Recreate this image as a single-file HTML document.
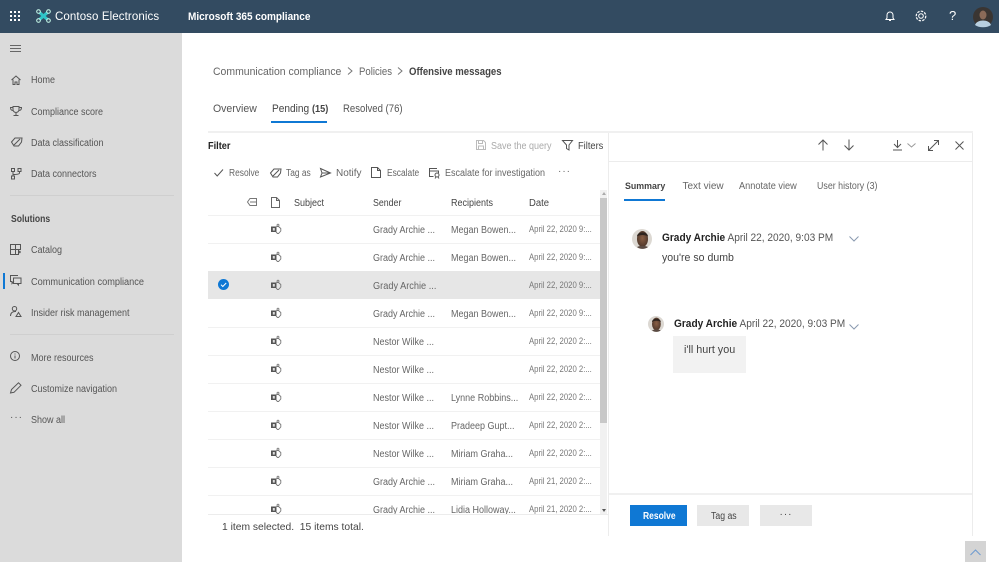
<!DOCTYPE html>
<html><head><meta charset="utf-8"><title>Microsoft 365 compliance</title>
<style>
html,body{margin:0;padding:0;width:999px;height:562px;overflow:hidden;background:#fff;font-family:"Liberation Sans",sans-serif}
.a{position:absolute}
.t{position:absolute;white-space:nowrap;line-height:14px;transform-origin:0 50%;transform:translateY(-6px) scaleX(var(--s,1))}
.nav{font-size:10px;color:#555;left:31px;--s:.9}
.c{font-size:10px;color:#666;--s:.9}
.d{font-size:9px;color:#777;--s:.86;margin-top:-1px}
.h{font-size:10px;color:#444;--s:.9}
.tb{font-size:10px;color:#666;--s:.84}
svg{position:absolute;overflow:visible;fill:none}
.row{position:absolute;left:208px;width:392px;height:27px;border-bottom:1px solid #f1f1f1}
</style></head><body>
<svg width="0" height="0" style="position:absolute"><defs>
<g id="tm" fill="none"><rect x="0" y="2.500" width="5.500" height="5.500" fill="#555"/><rect x="1.800" y="4" width="2" height="2.600" fill="#ddd"/><path d="M5.500 2.500H7.500l2.300 2v2.500L7.500 9.500H6.500L5 8" stroke="#777" stroke-width=".9"/><circle cx="7" cy="1.200" r="1" stroke="#777" stroke-width=".8"/></g>
<radialGradient id="sk" cx=".5" cy=".45" r=".6"><stop offset="0" stop-color="#8a5f45"/><stop offset="1" stop-color="#4a3428"/></radialGradient>
<g id="av"><circle cx="10" cy="10" r="10" fill="#dcd8d2"/><ellipse cx="10.500" cy="10" rx="5.500" ry="8" fill="url(#sk)"/><path d="M5 7.500C5 2 16 2 16 7.500 13 5.500 8 5.500 5 7.500z" fill="#2e241e"/><path d="M5 18c3-1.500 8-1.500 11 0-3 2.500-8 2.500-11 0z" fill="#5a4a42"/></g>
</defs></svg>

<!-- top bar -->
<div class="a" style="left:0;top:0;width:999px;height:33px;background:#334b61"></div>
<svg style="left:10px;top:11px" width="11" height="11"><g fill="#fff"><rect x="0" y="0" width="2" height="2"/><rect x="4" y="0" width="2" height="2"/><rect x="8" y="0" width="2" height="2"/><rect x="0" y="4" width="2" height="2"/><rect x="4" y="4" width="2" height="2"/><rect x="8" y="4" width="2" height="2"/><rect x="0" y="8" width="2" height="2"/><rect x="4" y="8" width="2" height="2"/><rect x="8" y="8" width="2" height="2"/></g></svg>
<svg style="left:36px;top:9px" width="15" height="14"><path d="M3 3l9 8M12 3l-9 8" stroke="#2fc4c8" stroke-width="3"/><circle cx="2.500" cy="2.500" r="1.800" stroke="#cfe" stroke-width="1" fill="#334b61"/><circle cx="12.500" cy="2.500" r="1.800" stroke="#cfe" stroke-width="1" fill="#334b61"/><circle cx="2.500" cy="11.500" r="1.800" stroke="#cfe" stroke-width="1" fill="#334b61"/><circle cx="12.500" cy="11.500" r="1.800" stroke="#cfe" stroke-width="1" fill="#334b61"/></svg>
<div class="t" style="left:55px;top:15.500px;font-size:11.500px;color:#fff;letter-spacing:.1px">Contoso Electronics</div>
<div class="t" style="left:188px;top:15.500px;font-size:11px;color:#fff;font-weight:bold;--s:.91">Microsoft 365 compliance</div>
<svg style="left:885px;top:10px" width="10" height="12" stroke="#fff"><path d="M2 8V5a3 3 0 0 1 6 0v3l1 1.500H1zM4 10.500h2"/></svg>
<svg style="left:915px;top:10px" width="12" height="12" stroke="#fff"><circle cx="6" cy="6" r="2.300"/><circle cx="6" cy="6" r="4.800" stroke-width="1.200" stroke-dasharray="2.500 1.200"/></svg>
<div class="t" style="left:949px;top:15px;font-size:13px;color:#fff">?</div>
<svg style="left:973px;top:7px" width="20" height="20"><circle cx="10" cy="10" r="10" fill="#3a3532"/><ellipse cx="10" cy="8" rx="3.500" ry="4.500" fill="#8a6a58"/><path d="M2 18c2-6 14-6 16 0-4 3-12 3-16 0z" fill="#b8cfe0"/></svg>

<!-- left nav -->
<div class="a" style="left:0;top:33px;width:182px;height:529px;background:#dbdbdb"></div>
<svg style="left:10px;top:45px" width="12" height="8" stroke="#666"><path d="M0 .500h11M0 3.500h11M0 6.500h11"/></svg>
<svg style="left:11px;top:75px" width="11" height="11" stroke="#555"><path d="M.5 5L5 1l4.500 4M2 4.500V9.500h2V7h2v2.500h2V4.500"/></svg>
<div class="t nav" style="top:80px">Home</div>
<svg style="left:10px;top:106px" width="12" height="11" stroke="#555"><path d="M3 .5h6v3a3 3 0 0 1-6 0zM3 1.500H.5c0 2 1 3 2.500 3M9 1.500h2.500c0 2-1 3-2.500 3M6 6.500V9M3.500 9.500h5" /></svg>
<div class="t nav" style="top:111.500px">Compliance score</div>
<svg style="left:11px;top:137px" width="12" height="10" stroke="#555"><path d="M.5 5L4 1h7l-.5 4-3 4H3zM3 8l6-6"/></svg>
<div class="t nav" style="top:142.500px">Data classification</div>
<svg style="left:11px;top:168px" width="11" height="12" stroke="#555"><rect x=".5" y=".5" width="3" height="3"/><rect x="7" y=".5" width="3" height="3"/><rect x=".5" y="8" width="3" height="3"/><path d="M2 3.500V8M8.500 3.500V5C8.500 6 7 6.500 2 6.500"/></svg>
<div class="t nav" style="top:174px">Data connectors</div>
<div class="a" style="left:10px;top:195px;width:164px;height:1px;background:#cfcfcf"></div>
<div class="t" style="left:10.500px;top:218.500px;font-size:10px;font-weight:bold;color:#444;--s:.86">Solutions</div>
<svg style="left:10px;top:244px" width="11" height="11" stroke="#555"><path d="M.5.500h10v5h-2v5H.5zM.5 5.500h10M5.500.500v10M8.500 8h2.500M9.700 6.800v2.500"/></svg>
<div class="t nav" style="top:250px">Catalog</div>
<div class="a" style="left:3px;top:273px;width:2px;height:16px;background:#0f78d4"></div>
<svg style="left:10px;top:275px" width="12" height="11" stroke="#555"><path d="M8 .5H.5v6h1.500v2l2-2"/><rect x="3.500" y="3" width="7.500" height="5.500"/><path d="M8.500 8.500v1.500l-1.500-1.500"/></svg>
<div class="t nav" style="top:281.500px;--s:.92">Communication compliance</div>
<svg style="left:10px;top:306px" width="12" height="12" stroke="#555"><circle cx="4.500" cy="2.700" r="2.200"/><path d="M.5 10c0-3 2-4.800 5.500-4.500M6 10.500l2.500-4 2.500 4z"/></svg>
<div class="t nav" style="top:312.500px">Insider risk management</div>
<div class="a" style="left:10px;top:334px;width:164px;height:1px;background:#cfcfcf"></div>
<svg style="left:10px;top:351px" width="11" height="11" stroke="#555"><circle cx="5" cy="5" r="4.500"/><path d="M5 4.500v3M5 2.500v1"/></svg>
<div class="t nav" style="top:357.500px">More resources</div>
<svg style="left:10px;top:382px" width="12" height="12" stroke="#555"><path d="M.5 11l1-3.500L8.500.8l2.500 2.500-7 7z"/></svg>
<div class="t nav" style="top:389px">Customize navigation</div>
<div class="t nav" style="left:10px;top:417px;letter-spacing:1px;font-size:10px;--s:1">···</div>
<div class="t nav" style="top:420px">Show all</div>

<!-- breadcrumb -->
<div class="t" style="left:213px;top:71px;font-size:11px;color:#666;--s:.95">Communication compliance</div>
<svg style="left:347px;top:67px" width="6" height="9" stroke="#777"><path d="M1 .5l4 3.500-4 3.500"/></svg>
<div class="t" style="left:359px;top:71px;font-size:11px;color:#666;--s:.87">Policies</div>
<svg style="left:397px;top:67px" width="6" height="9" stroke="#777"><path d="M1 .5l4 3.500-4 3.500"/></svg>
<div class="t" style="left:409px;top:71px;font-size:11px;color:#444;font-weight:bold;--s:.87">Offensive messages</div>

<!-- tabs -->
<div class="t" style="left:213px;top:108px;font-size:11px;color:#555;--s:.955">Overview</div>
<div class="t" style="left:271.500px;top:108px;font-size:11px;color:#444;--s:.92">Pending <span style="font-size:10px;font-weight:bold">(15)</span></div>
<div class="a" style="left:271px;top:121px;width:56px;height:1.500px;background:#0f78d4"></div>
<div class="t" style="left:343px;top:108px;font-size:11px;color:#555;--s:.87">Resolved (76)</div>
<div class="a" style="left:208px;top:131px;width:765px;height:2px;background:#f0f0f0"></div>

<!-- filter row -->
<div class="t" style="left:208px;top:146px;font-size:10px;font-weight:bold;color:#222;--s:.92">Filter</div>
<svg style="left:476px;top:140px" width="10" height="10" stroke="#bbb"><path d="M.5.5h7l2 2v7h-9zM2.500.5v3h4v-3M2.500 9.500v-3.500h5v3.500"/></svg>
<div class="t" style="left:490.500px;top:145.500px;font-size:10px;color:#aaa;--s:.9">Save the query</div>
<svg style="left:562px;top:140px" width="12" height="11" stroke="#555"><path d="M.5.500h10L7 5v5L4.500 8.500V5z"/></svg>
<div class="t" style="left:578px;top:145.500px;font-size:10px;color:#444;--s:.93">Filters</div>

<!-- toolbar -->
<svg style="left:214px;top:169px" width="10" height="8" stroke="#555"><path d="M.5 4l2.700 3L9 .5"/></svg>
<div class="t tb" style="left:229px;top:173px">Resolve</div>
<svg style="left:270px;top:168px" width="12" height="10" stroke="#555"><path d="M.5 5L4 1h7l-.5 4-3 4H3zM3 8l6-6"/></svg>
<div class="t tb" style="left:285.500px;top:173px">Tag as</div>
<svg style="left:320px;top:168px" width="11" height="10" stroke="#555"><path d="M.5.500l10 4.500-10 4 1.500-4zM2 5h8"/></svg>
<div class="t tb" style="left:336px;top:173px;--s:1">Notify</div>
<svg style="left:371px;top:167px" width="11" height="12" stroke="#555"><path d="M.5.500h6l3 3v7h-9zM6.500.500v3h3"/></svg>
<div class="t tb" style="left:387px;top:173px">Escalate</div>
<svg style="left:429px;top:168px" width="12" height="11" stroke="#555"><path d="M8 .5H.5v8h4M.5 3h9v2"/><circle cx="8" cy="7" r="2"/><path d="M7 9l-1 1.500M9 9l1 1.500"/></svg>
<div class="t tb" style="left:445px;top:173px;--s:.9">Escalate for investigation</div>
<div class="t tb" style="left:558px;top:171px;letter-spacing:1px;--s:1">···</div>

<!-- table header -->
<svg style="left:247px;top:198px" width="10" height="8" stroke="#777"><path d="M3 .5h6.500v7H3L.5 4zM3 4h6.500"/></svg>
<svg style="left:271px;top:197px" width="9" height="11" stroke="#666"><path d="M.5.500h5l3 3v7h-8zM5.500.500v3h3"/></svg>
<div class="t h" style="left:294px;top:202.500px">Subject</div>
<div class="t h" style="left:373px;top:202.500px;--s:.88">Sender</div>
<div class="t h" style="left:451px;top:202.500px">Recipients</div>
<div class="t h" style="left:529px;top:202.500px;--s:.95">Date</div>
<div class="a" style="left:208px;top:215px;width:392px;height:1px;background:#f1f1f1"></div>

<!-- rows -->
<div class="row" style="top:216px"></div>
<div class="row" style="top:244px"></div>
<div class="a" style="left:208px;top:271px;width:392px;height:28px;background:#e6e6e6"></div>
<div class="row" style="top:300px"></div>
<div class="row" style="top:328px"></div>
<div class="row" style="top:356px"></div>
<div class="row" style="top:384px"></div>
<div class="row" style="top:412px"></div>
<div class="row" style="top:440px"></div>
<div class="row" style="top:468px"></div>

<svg style="left:218px;top:279px" width="11" height="11"><circle cx="5.500" cy="5.500" r="5.500" fill="#0f78d4"/><path d="M3 5.700l1.800 1.800L8.200 4" stroke="#fff" stroke-width="1"/></svg>

<svg style="left:271px;top:224px" width="11" height="10"><use href="#tm"/></svg>
<svg style="left:271px;top:252px" width="11" height="10"><use href="#tm"/></svg>
<svg style="left:271px;top:280px" width="11" height="10"><use href="#tm"/></svg>
<svg style="left:271px;top:308px" width="11" height="10"><use href="#tm"/></svg>
<svg style="left:271px;top:336px" width="11" height="10"><use href="#tm"/></svg>
<svg style="left:271px;top:364px" width="11" height="10"><use href="#tm"/></svg>
<svg style="left:271px;top:392px" width="11" height="10"><use href="#tm"/></svg>
<svg style="left:271px;top:420px" width="11" height="10"><use href="#tm"/></svg>
<svg style="left:271px;top:448px" width="11" height="10"><use href="#tm"/></svg>
<svg style="left:271px;top:476px" width="11" height="10"><use href="#tm"/></svg>
<svg style="left:271px;top:504px" width="11" height="10"><use href="#tm"/></svg>

<div class="t c" style="left:373px;top:230px">Grady Archie ...</div><div class="t c" style="left:451px;top:230px">Megan Bowen...</div><div class="t d" style="left:529px;top:229px">April 22, 2020 9:...</div>
<div class="t c" style="left:373px;top:258px">Grady Archie ...</div><div class="t c" style="left:451px;top:258px">Megan Bowen...</div><div class="t d" style="left:529px;top:257px">April 22, 2020 9:...</div>
<div class="t c" style="left:373px;top:286px;--s:.92">Grady Archie ...</div><div class="t d" style="left:529px;top:285px">April 22, 2020 9:...</div>
<div class="t c" style="left:373px;top:314px">Grady Archie ...</div><div class="t c" style="left:451px;top:314px">Megan Bowen...</div><div class="t d" style="left:529px;top:313px">April 22, 2020 9:...</div>
<div class="t c" style="left:373px;top:342px">Nestor Wilke ...</div><div class="t d" style="left:529px;top:341px">April 22, 2020 2:...</div>
<div class="t c" style="left:373px;top:370px">Nestor Wilke ...</div><div class="t d" style="left:529px;top:369px">April 22, 2020 2:...</div>
<div class="t c" style="left:373px;top:398px">Nestor Wilke ...</div><div class="t c" style="left:451px;top:398px">Lynne Robbins...</div><div class="t d" style="left:529px;top:397px">April 22, 2020 2:...</div>
<div class="t c" style="left:373px;top:426px">Nestor Wilke ...</div><div class="t c" style="left:451px;top:426px">Pradeep Gupt...</div><div class="t d" style="left:529px;top:425px">April 22, 2020 2:...</div>
<div class="t c" style="left:373px;top:454px">Nestor Wilke ...</div><div class="t c" style="left:451px;top:454px">Miriam Graha...</div><div class="t d" style="left:529px;top:453px">April 22, 2020 2:...</div>
<div class="t c" style="left:373px;top:482px">Grady Archie ...</div><div class="t c" style="left:451px;top:482px">Miriam Graha...</div><div class="t d" style="left:529px;top:481px">April 21, 2020 2:...</div>
<div class="t c" style="left:373px;top:510px">Grady Archie ...</div><div class="t c" style="left:451px;top:510px">Lidia Holloway...</div><div class="t d" style="left:529px;top:509px">April 21, 2020 2:...</div>

<!-- scrollbar -->
<div class="a" style="left:600px;top:190px;width:7px;height:326px;background:#f1f1f1"></div>
<div class="a" style="left:600px;top:198px;width:7px;height:225px;background:#c8c8c8"></div>
<svg style="left:602px;top:192px" width="4" height="3"><path d="M0 3L2 0l2 3z" fill="#aaa"/></svg>
<svg style="left:602px;top:509px" width="4" height="3"><path d="M0 0L2 3l2-3z" fill="#555"/></svg>

<!-- footer of list -->
<div class="a" style="left:208px;top:514px;width:400px;height:22px;background:#fff;border-top:1px solid #ececec"></div>
<div class="t" style="left:221.500px;top:526px;font-size:10.500px;color:#444;--s:.98">1 item selected.&nbsp; 15 items total.</div>

<!-- right panel frame -->
<div class="a" style="left:608px;top:133px;width:1px;height:403px;background:#ececec"></div>
<div class="a" style="left:972px;top:133px;width:1px;height:403px;background:#ececec"></div>
<div class="a" style="left:609px;top:161px;width:363px;height:1px;background:#ececec"></div>
<div class="a" style="left:609px;top:493px;width:363px;height:2px;background:#f0f0f0"></div>

<svg style="left:818px;top:139px" width="10" height="12" stroke="#555"><path d="M5 11.500V1M.5 5.500L5 1l4.500 4.500"/></svg>
<svg style="left:844px;top:139px" width="10" height="12" stroke="#555"><path d="M5 .5V11M.5 6.500L5 11l4.500-4.500"/></svg>
<svg style="left:893px;top:140px" width="9" height="11" stroke="#555"><path d="M4.500 0v7M1 4l3.500 3.500L8 4M0 10h9"/></svg>
<svg style="left:907px;top:143px" width="9" height="5" stroke="#999"><path d="M.5.500L4.500 4 8.500.5"/></svg>
<svg style="left:928px;top:140px" width="11" height="11" stroke="#555"><path d="M1 10L10 1M6 .5h4.500V5M.5 6v4.500H5"/></svg>
<svg style="left:955px;top:141px" width="9" height="9" stroke="#555"><path d="M.5.500l8 8M8.500.500l-8 8"/></svg>

<div class="t" style="left:624.500px;top:186px;font-size:9.500px;font-weight:bold;color:#444;--s:.93">Summary</div>
<div class="a" style="left:624px;top:199px;width:41px;height:1.500px;background:#0f78d4"></div>
<div class="t" style="left:682.500px;top:186px;font-size:10px;color:#666">Text view</div>
<div class="t" style="left:738.500px;top:186px;font-size:10px;color:#666;--s:.92">Annotate view</div>
<div class="t" style="left:816.500px;top:186px;font-size:10px;color:#666;--s:.885">User history (3)</div>

<!-- messages -->
<svg style="left:632px;top:229px" width="20" height="20"><use href="#av"/></svg>
<div class="t" style="left:662px;top:237px;font-size:11px;color:#555;--s:.92"><b style="color:#222">Grady Archie</b> April 22, 2020, 9:03 PM</div>
<svg style="left:849px;top:236px" width="10" height="6" stroke="#8a9ab0"><path d="M.5.500L5 5 9.500.5"/></svg>
<div class="t" style="left:662px;top:257px;font-size:11px;color:#444;--s:.96">you're so dumb</div>

<svg style="left:648px;top:316px" width="16" height="16"><g transform="scale(.8)"><use href="#av"/></g></svg>
<div class="t" style="left:673.500px;top:323px;font-size:11px;color:#555;--s:.92"><b style="color:#222">Grady Archie</b> April 22, 2020, 9:03 PM</div>
<svg style="left:849px;top:324px" width="10" height="6" stroke="#8a9ab0"><path d="M.5.500L5 5 9.500.5"/></svg>
<div class="a" style="left:673px;top:336px;width:73px;height:37px;background:#f2f2f2"></div>
<div class="t" style="left:683.500px;top:349px;font-size:11px;color:#444;--s:.98">i'll hurt you</div>

<!-- buttons -->
<div class="a" style="left:630px;top:505px;width:57px;height:21px;background:#0f78d4"></div>
<div class="t" style="left:642.500px;top:516px;color:#fff;font-size:10px;font-weight:bold;--s:.85">Resolve</div>
<div class="a" style="left:697px;top:505px;width:52px;height:21px;background:#e8e8e8"></div>
<div class="t" style="left:711px;top:516px;color:#444;font-size:10px;--s:.87">Tag as</div>
<div class="a" style="left:760px;top:505px;width:52px;height:21px;background:#e8e8e8;color:#444;font-size:10px;line-height:20px;text-align:center;letter-spacing:1px">···</div>

<!-- scroll to top -->
<div class="a" style="left:965px;top:541px;width:21px;height:21px;background:#d4d4d4"></div>
<svg style="left:970px;top:549px" width="11" height="7" stroke="#6d9bd0"><path d="M.5 6L5.500 1l5 5"/></svg>
</body></html>
